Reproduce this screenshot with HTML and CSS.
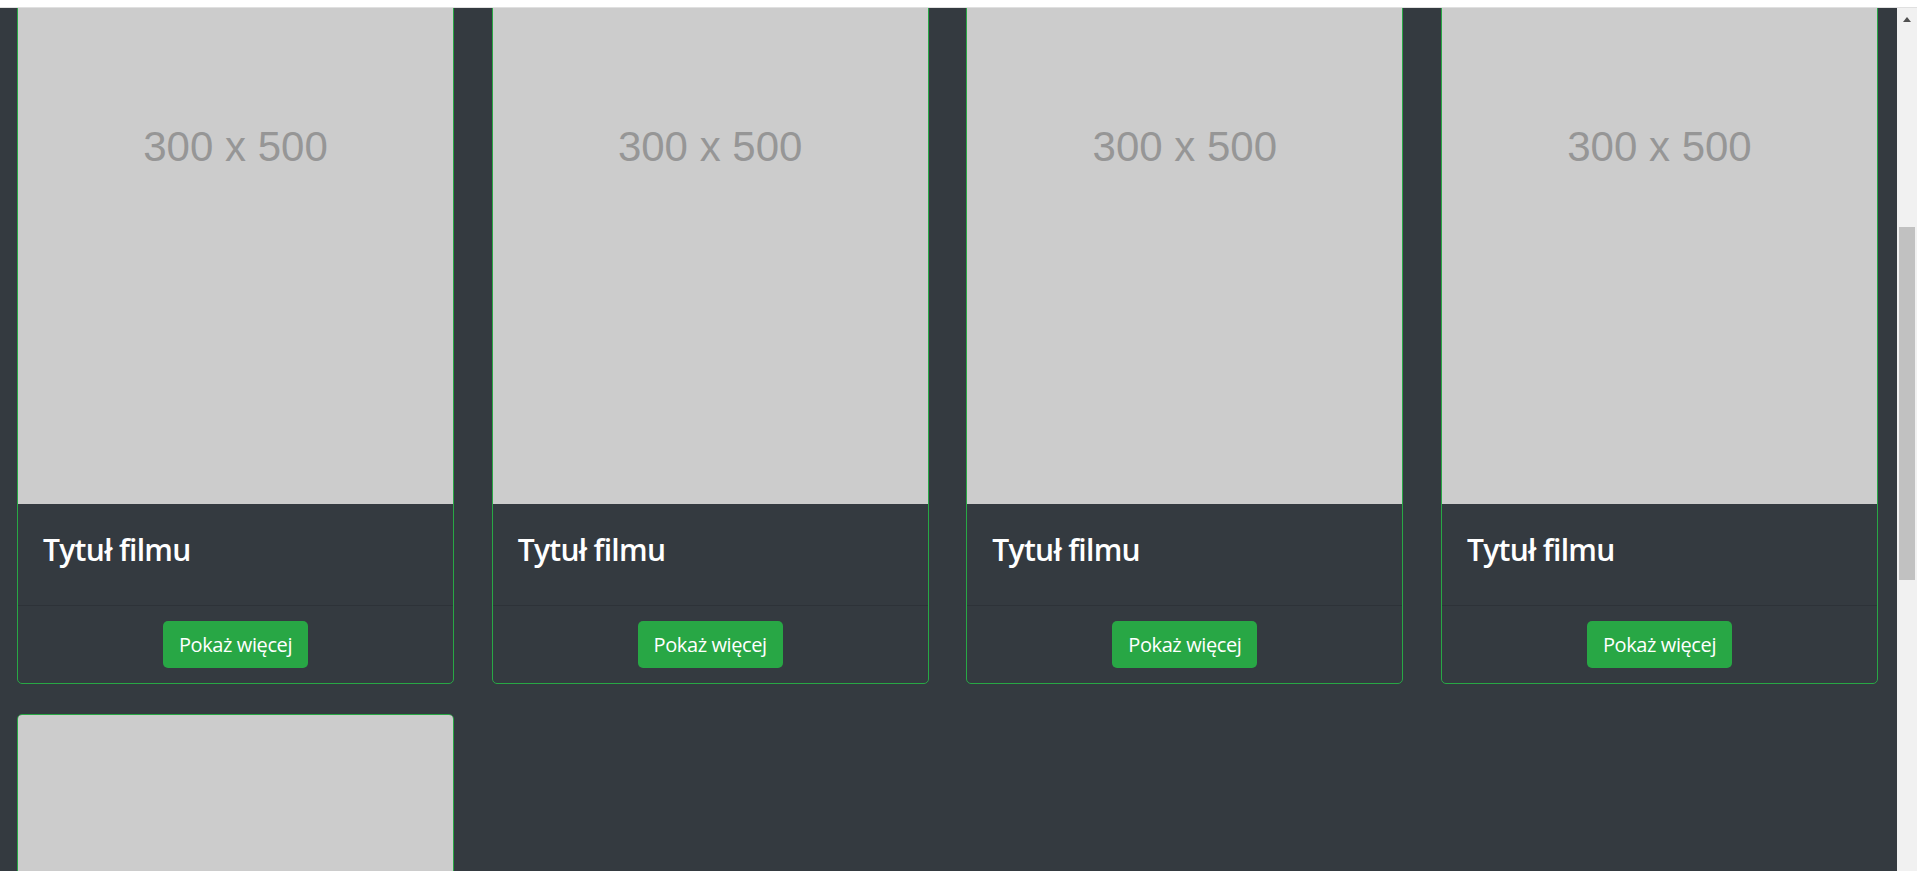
FILE: index.html
```html
<!DOCTYPE html>
<html lang="pl">
<head>
<meta charset="utf-8">
<title>Filmy</title>
<link rel="stylesheet" href="styles.css">
</head>
<body>
<div class="topbar"></div>
<div class="window">
  <div class="viewport">
    <main class="page">
      <div class="grid">
        <div class="card">
          <div class="card-img">300 x 500</div>
          <div class="card-body"><h5 class="card-title">Tytuł filmu</h5></div>
          <div class="card-footer"><a class="btn" href="#">Pokaż więcej</a></div>
        </div>
        <div class="card">
          <div class="card-img">300 x 500</div>
          <div class="card-body"><h5 class="card-title">Tytuł filmu</h5></div>
          <div class="card-footer"><a class="btn" href="#">Pokaż więcej</a></div>
        </div>
        <div class="card">
          <div class="card-img">300 x 500</div>
          <div class="card-body"><h5 class="card-title">Tytuł filmu</h5></div>
          <div class="card-footer"><a class="btn" href="#">Pokaż więcej</a></div>
        </div>
        <div class="card">
          <div class="card-img">300 x 500</div>
          <div class="card-body"><h5 class="card-title">Tytuł filmu</h5></div>
          <div class="card-footer"><a class="btn" href="#">Pokaż więcej</a></div>
        </div>
        <div class="card">
          <div class="card-img"></div>
        </div>
      </div>
    </main>
  </div>
  <div class="scrollbar">
    <div class="sb-arrow"></div>
    <div class="sb-thumb"></div>
  </div>
</div>
</body>
</html>
```
FILE: styles.css
```css
html, body {
  margin: 0;
  padding: 0;
}
body {
  background: #343a40;
  font-family: "Open Sans", "Noto Sans", sans-serif;
  overflow: hidden;
  height: 871px;
}
.topbar {
  height: 7px;
  background: #ffffff;
  border-bottom: 1px solid #e0e0e0;
}
.window {
  display: flex;
  height: 863px;
}
.viewport {
  flex: 1;
  overflow: hidden;
  background: #343a40;
}
.page {
  margin-top: -230px;
}
.grid {
  display: grid;
  grid-template-columns: repeat(4, 1fr);
  column-gap: 37.67px;
  row-gap: 30px;
  padding: 0 19px 0 17px;
}
.card {
  border: 1px solid #28a745;
  border-radius: 5px;
  overflow: hidden;
  background: #343a40;
  display: flex;
  flex-direction: column;
}
.card-img {
  height: 725px;
  box-sizing: border-box;
  padding-top: 11px;
  background: #cccccc;
  display: flex;
  align-items: center;
  justify-content: center;
  font-family: "Liberation Sans", Arial, sans-serif;
  font-size: 42px;
  color: #969696;
}
.card-body {
  height: 101px;
  box-sizing: border-box;
  padding: 28px 25px 0 25px;
}
.card-title {
  margin: 0;
  font-size: 30px;
  line-height: 36px;
  font-weight: 600;
  letter-spacing: -0.7px;
  color: #ffffff;
}
.card-footer {
  border-top: 1px solid rgba(0, 0, 0, 0.125);
  padding: 15px;
  display: flex;
  justify-content: center;
}
.btn {
  display: block;
  height: 47px;
  line-height: 47px;
  padding: 0 16px;
  background: #28a745;
  border-radius: 5px;
  color: #ffffff;
  text-decoration: none;
  font-size: 20px;
  letter-spacing: -0.4px;
}
.scrollbar {
  width: 20px;
  background: #f1f1f1;
  display: flex;
  flex-direction: column;
  align-items: center;
  padding-top: 9px;
  box-sizing: border-box;
}
.sb-arrow {
  width: 0;
  height: 0;
  border-left: 4.5px solid transparent;
  border-right: 4.5px solid transparent;
  border-bottom: 5px solid #505050;
}
.sb-thumb {
  margin-top: 205px;
  width: 16px;
  height: 353px;
  background: #c1c1c1;
}
```
